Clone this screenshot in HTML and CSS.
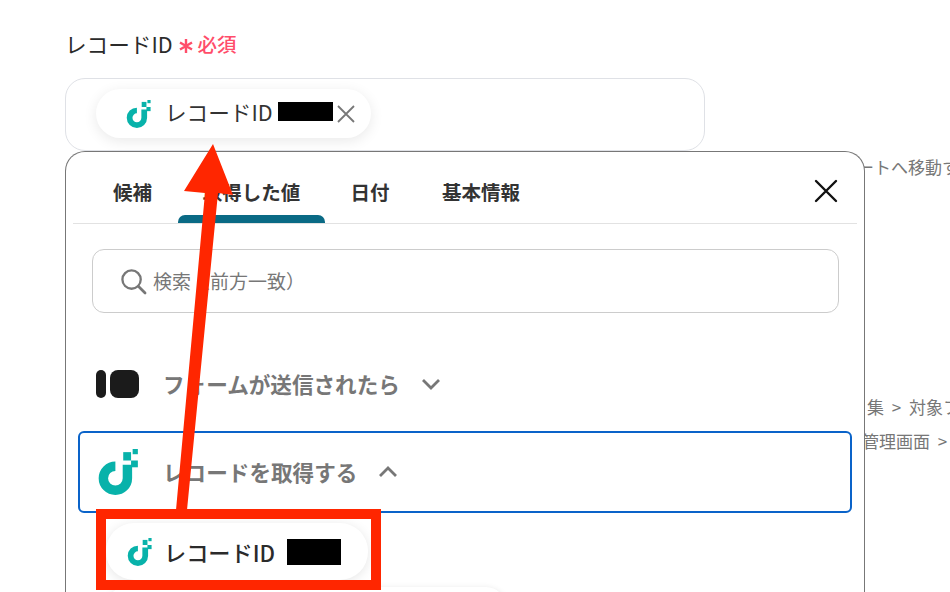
FILE: index.html
```html
<!DOCTYPE html>
<html lang="ja">
<head>
    <meta charset="UTF-8">
    <title>レコードID</title>
    <link rel="stylesheet" href="styles.css">
</head>
<body>
    <svg width="0" height="0" class="defs">
        <symbol id="logo" viewBox="0 0 38 44">
            <path d="M16.500 16.500a11.500 11.500 0 1 0 11.500 11.500V15" fill="none" stroke="#08b2aa" stroke-width="9"/>
            <rect x="24" y="3" width="7.500" height="8" fill="#08b2aa"/>
            <rect x="33" y="0" width="5" height="5" fill="#08b2aa"/>
            <rect x="31.500" y="11" width="6.500" height="6.500" fill="#08b2aa"/>
        </symbol>
    </svg>

    <div class="behind behind-1">ートへ移動す</div>
    <div class="behind behind-2">集 &gt; 対象フ</div>
    <div class="behind behind-3">管理画面 &gt;</div>

    <div class="page">
        <div class="field-label">
            <span>レコードID</span>
            <svg class="req-star" viewBox="0 0 14 14">
                <path d="M7 0v14M1 3.500l12 7M13 3.500l-12 7" stroke="#ff4d6a" stroke-width="2.400" fill="none"/>
            </svg>
            <span class="req-text">必須</span>
        </div>
        <div class="field-box">
            <div class="chip">
                <svg class="chip-logo"><use href="#logo"/></svg>
                <span class="chip-text">レコードID</span>
                <span class="mask"></span>
                <svg class="chip-close" viewBox="0 0 18 18">
                    <path d="M1 1l16 16M17 1L1 17" stroke="#777" stroke-width="1.800" fill="none"/>
                </svg>
            </div>
        </div>

        <div class="panel">
            <div class="tabs">
                <div class="tab tab-1">候補</div>
                <div class="tab tab-2 active">取得した値</div>
                <div class="tab tab-3">日付</div>
                <div class="tab tab-4">基本情報</div>
                <svg class="panel-close" viewBox="0 0 24 24">
                    <path d="M2 2l20 20M22 2L2 22" stroke="#111" stroke-width="2.400" stroke-linecap="round" fill="none"/>
                </svg>
            </div>

            <div class="search">
                <svg class="search-icon" viewBox="0 0 28 28">
                    <circle cx="12" cy="12" r="9.500" fill="none" stroke="#777" stroke-width="2.400"/>
                    <path d="M19 19l7 7" stroke="#777" stroke-width="2.800" stroke-linecap="round"/>
                </svg>
                <span class="search-text">検索（前方一致）</span>
            </div>

            <div class="group">
                <svg class="form-logo" viewBox="0 0 44 30">
                    <rect x="0" y="1" width="10" height="28" rx="5" fill="#1b1b1b"/>
                    <rect x="14" y="1" width="29" height="28" rx="8" fill="#1b1b1b"/>
                </svg>
                <span class="group-title">フォームが送信されたら</span>
                <svg class="caret" viewBox="0 0 20 12">
                    <path d="M2 2l8 8 8-8" fill="none" stroke="#777" stroke-width="2.800"/>
                </svg>
            </div>

            <div class="group selected">
                <svg class="group-logo"><use href="#logo"/></svg>
                <span class="group-title">レコードを取得する</span>
                <svg class="caret" viewBox="0 0 20 12">
                    <path d="M2 10l8-8 8 8" fill="none" stroke="#777" stroke-width="2.800"/>
                </svg>
            </div>

            <div class="result-chip">
                <svg class="result-logo"><use href="#logo"/></svg>
                <span class="result-text">レコードID</span>
                <span class="mask mask-2"></span>
            </div>
            <div class="next-chip"></div>
        </div>
    </div>

    <!-- red annotation on top of the screenshot -->
    <div class="note-box"></div>
    <svg class="note-arrow" width="950" height="592">
        <polygon points="176,510 187,510 218,193 233,195 213,144 184,191 205,193" fill="#ff2600"/>
    </svg>
</body>
</html>
```

FILE: styles.css
```css
* {
    box-sizing: border-box;
}
html, body {
    margin: 0;
    height: 592px;
    overflow: hidden;
    background: #fff;
}
body {
    position: relative;
    font-family: "Noto Sans CJK JP", "Noto Sans", sans-serif;
    color: #2b2b2b;
}
.defs {
    position: absolute;
}
.behind {
    position: absolute;
    font-size: 17px;
    line-height: 22px;
    color: #777;
    white-space: nowrap;
    word-spacing: 4px;
}
.behind-1 {
    left: 857px;
    top: 156px;
}
.behind-2 {
    left: 867px;
    top: 396px;
}
.behind-3 {
    left: 862px;
    top: 430px;
}
.page {
    position: relative;
    width: 800px;
    margin-left: 65px;
    padding-top: 28px;
}
.field-label {
    display: flex;
    align-items: center;
    height: 30px;
    font-size: 21.600px;
    margin-bottom: 20px;
}
.req-star {
    width: 14px;
    height: 14px;
    margin: 5px 0 0 6px;
}
.req-text {
    color: #ff4d6a;
    font-size: 19.500px;
    font-weight: 500;
    margin-left: 5px;
}
.field-box {
    width: 640px;
    height: 73px;
    padding: 10px 0 0 30px;
    border: 1px solid #dfe1e6;
    border-radius: 20px;
}
.chip {
    display: flex;
    align-items: center;
    width: 275px;
    height: 49px;
    padding-left: 30px;
    border-radius: 25px;
    background: #fff;
    box-shadow: 0 3px 14px rgba(0, 0, 0, 0.09);
}
.chip-logo {
    width: 25px;
    height: 28px;
}
.chip-text {
    margin: 0 0 4px 14px;
    font-size: 21.600px;
    color: #333;
}
.mask {
    width: 55px;
    height: 19px;
    margin: 0 0 4px 5px;
    background: #000;
}
.chip-close {
    width: 18px;
    height: 18px;
    margin-left: 4px;
}
.panel {
    width: 800px;
    height: 441px;
    padding: 0 7px;
    border: 1px solid #777;
    border-bottom: 0;
    border-radius: 20px 20px 0 0;
    background: #fff;
    overflow: hidden;
}
.tabs {
    position: relative;
    display: flex;
    height: 72px;
    border-bottom: 1px solid #e2e2e2;
}
.tab {
    position: relative;
    display: flex;
    align-items: center;
    justify-content: center;
    height: 71px;
    padding-top: 8px;
    font-size: 19.500px;
    font-weight: 700;
    color: #333;
}
.tab-1 {
    margin-left: 33px;
    width: 53px;
}
.tab-2 {
    margin-left: 19px;
    width: 147px;
}
.tab-3 {
    margin-left: 20px;
    width: 50px;
}
.tab-4 {
    margin-left: 42px;
    width: 88px;
}
.tab.active::after {
    content: "";
    position: absolute;
    left: 0;
    right: 0;
    bottom: 0;
    height: 8px;
    border-radius: 7px 7px 0 0;
    background: #0a6a85;
}
.panel-close {
    position: absolute;
    right: 19px;
    top: 27px;
    width: 24px;
    height: 24px;
}
.search {
    display: flex;
    align-items: center;
    width: 747px;
    height: 64px;
    margin: 25px 0 0 19px;
    padding-left: 27px;
    border: 1px solid #ccc;
    border-radius: 12px;
    font-size: 19px;
    color: #777;
}
.search-icon {
    width: 27px;
    height: 27px;
    margin-right: 6px;
}
.search-text {
    margin-bottom: 2px;
}
.group {
    display: flex;
    align-items: center;
    height: 82px;
}
.group:not(.selected) {
    margin-top: 30px;
    margin-bottom: 6px;
    padding-left: 23px;
}
.selected {
    width: 774px;
    margin-left: 5px;
    padding-left: 18px;
    border: 2.500px solid #0a63c9;
    border-radius: 6px;
}
.form-logo {
    width: 44px;
    height: 30px;
}
.group-logo {
    width: 40px;
    height: 46px;
}
.group-title {
    margin: 0 0 2px 23px;
    font-size: 21.600px;
    font-weight: 700;
    color: #777;
}
.selected .group-title {
    margin-left: 25px;
}
.caret {
    width: 20px;
    height: 12px;
    margin-left: 21px;
}
.result-chip {
    display: flex;
    align-items: center;
    width: 262px;
    height: 57px;
    margin: 10px 0 0 33px;
    padding-left: 21px;
    border-radius: 28px;
    background: #fff;
    box-shadow: 0 2px 12px rgba(0, 0, 0, 0.1);
}
.result-logo {
    width: 25px;
    height: 28px;
}
.result-text {
    margin-left: 12px;
    font-size: 22.200px;
    font-weight: 500;
}
.mask-2 {
    height: 26px;
    width: 54px;
    margin: 0 0 0 12px;
}
.next-chip {
    width: 400px;
    height: 40px;
    margin: 7px 0 0 33px;
    border-radius: 20px;
    background: #fff;
    box-shadow: 0 1px 6px rgba(0, 0, 0, 0.1);
}
.note-box {
    position: absolute;
    left: 96px;
    top: 509px;
    width: 285px;
    height: 81px;
    border: 10px solid #ff2600;
}
.note-arrow {
    position: absolute;
    left: 0;
    top: 0;
}
```
